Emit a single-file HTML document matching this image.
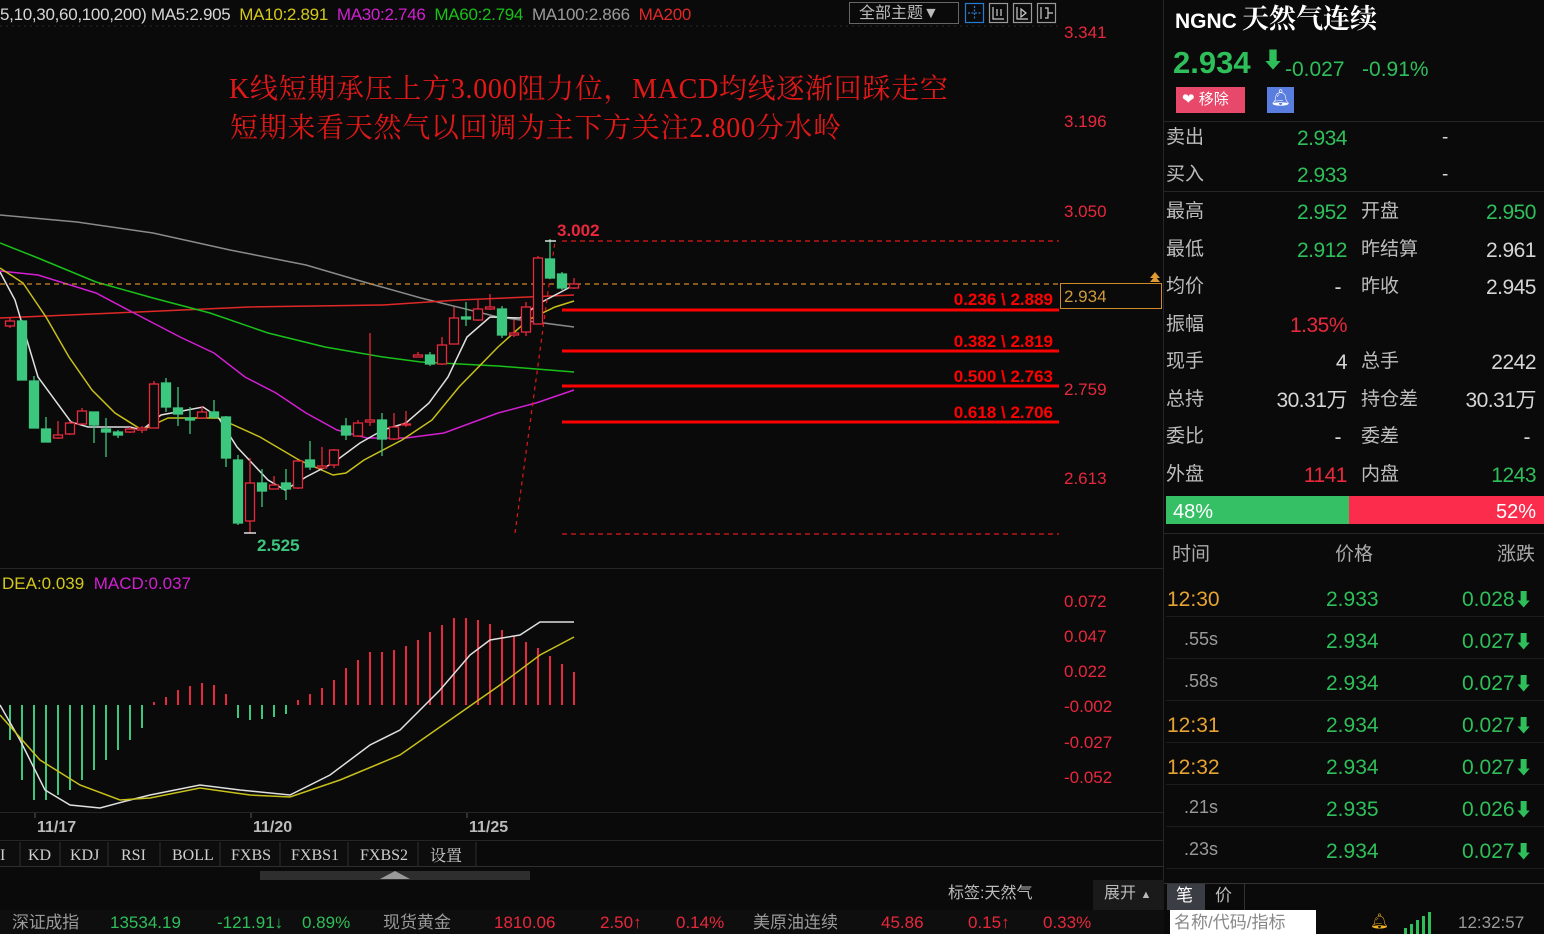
<!DOCTYPE html>
<html><head><meta charset="utf-8">
<style>
*{margin:0;padding:0;box-sizing:border-box}
body{width:1544px;height:934px;background:#0a0a0a;position:relative;overflow:hidden;font-family:"Liberation Sans","Noto Sans CJK SC",sans-serif;color:#ccc}
.a{position:absolute;white-space:nowrap;line-height:1}
.lb{color:#bdbdbd;font-size:19px}
.v{font-size:21px;text-align:right;letter-spacing:-0.5px}
.g{color:#2fbf5a}.r{color:#e8283c}.w{color:#d6d6d6}.y{color:#e7a332}.gr{color:#9a9a9a}
.serif{font-family:"Liberation Serif","Noto Serif CJK SC",serif}
</style></head><body>

<svg class="a" style="left:0;top:0" width="1164" height="934" xmlns="http://www.w3.org/2000/svg">
<line x1="0" y1="568.5" x2="1164" y2="568.5" stroke="#262626"/>
<line x1="0" y1="812.5" x2="1164" y2="812.5" stroke="#262626"/>
<line x1="0" y1="840.5" x2="1164" y2="840.5" stroke="#262626"/>
<line x1="1163.5" y1="0" x2="1163.5" y2="880" stroke="#262626"/>
<line x1="0" y1="26" x2="1060" y2="26" stroke="#2a2a2a" stroke-dasharray="2,4"/>
<polyline fill="none" stroke="#8a8a8a" stroke-width="1.5" points="0,215 77,222 153,233 230,250 306,265 364,282 421,298 498,317 574,327"/>
<polyline fill="none" stroke="#e02828" stroke-width="1.5" points="0,318 115,313 249,307 383,305 459,300 574,295"/>
<polyline fill="none" stroke="#19c119" stroke-width="1.5" points="0,243 38,258 96,282 153,298 210,313 268,333 325,347 383,357 421,362 498,366 574,372"/>
<polyline fill="none" stroke="#d21fd2" stroke-width="1.5" points="0,271 38,275 96,293 134,313 180,337 214,353 245,377 276,393 306,413 337,430 367,438 406,438 444,433 498,413 536,403 574,390"/>
<polyline fill="none" stroke="#c8c01a" stroke-width="1.5" points="0,268 23,283 46,317 69,357 92,390 115,413 142,430 168,418 218,418 260,437 299,460 333,475 346,473 364,460 402,440 432,420 459,387 498,347 528,320 555,307 574,301"/>
<polyline fill="none" stroke="#e0e0e0" stroke-width="1.5" points="0,272 15,300 38,377 71,422 88,427 130,427 142,430 161,415 203,407 218,417 237,447 268,480 285,490 306,477 333,463 360,443 383,430 406,423 429,403 448,377 467,337 490,317 520,318 540,303 559,293 574,285"/>
<line x1="0" y1="284" x2="1060" y2="284" stroke="#d08a2a" stroke-width="1.2" stroke-dasharray="5,4"/>
<line x1="562" y1="241" x2="1059" y2="241" stroke="#e01818" stroke-width="1.2" stroke-dasharray="5,4"/>
<line x1="562" y1="534" x2="1059" y2="534" stroke="#e01818" stroke-width="1.2" stroke-dasharray="5,4"/>
<line x1="515" y1="533" x2="555" y2="241" stroke="#e01818" stroke-width="1.2" stroke-dasharray="4,4"/>
<line x1="562" y1="310" x2="1059" y2="310" stroke="#f00" stroke-width="3"/>
<line x1="562" y1="351" x2="1059" y2="351" stroke="#f00" stroke-width="3"/>
<line x1="562" y1="386" x2="1059" y2="386" stroke="#f00" stroke-width="3"/>
<line x1="562" y1="422" x2="1059" y2="422" stroke="#f00" stroke-width="3"/>
<g font-family="Liberation Sans,sans-serif" font-weight="bold" font-size="17" fill="#f00" text-anchor="end">
<text x="1053" y="305">0.236 \ 2.889</text>
<text x="1053" y="347">0.382 \ 2.819</text>
<text x="1053" y="382">0.500 \ 2.763</text>
<text x="1053" y="418">0.618 \ 2.706</text>
</g>
<g stroke-width="1.3">
<g stroke="#e8283c" fill="#0a0a0a">
<line x1="10" y1="318" x2="10" y2="328"/><rect x="5.5" y="321" width="9" height="5"/>
<line x1="58" y1="421" x2="58" y2="439"/><rect x="53.5" y="435" width="9" height="3"/>
<line x1="70" y1="421" x2="70" y2="435"/><rect x="65.5" y="423" width="9" height="11"/>
<line x1="82" y1="408" x2="82" y2="424"/><rect x="77.5" y="411" width="9" height="13"/>
<line x1="130" y1="427" x2="130" y2="433"/><rect x="125.5" y="429" width="9" height="3"/>
<line x1="142" y1="426" x2="142" y2="433"/><rect x="137.5" y="428" width="9" height="2"/>
<line x1="154" y1="381" x2="154" y2="428"/><rect x="149.5" y="384" width="9" height="44"/>
<line x1="202" y1="406" x2="202" y2="419"/><rect x="197.5" y="412" width="9" height="6"/>
<line x1="250" y1="458" x2="250" y2="533"/><rect x="245.5" y="483" width="9" height="38"/>
<line x1="274" y1="476" x2="274" y2="489"/><rect x="269.5" y="485" width="9" height="4"/>
<line x1="298" y1="460" x2="298" y2="489"/><rect x="293.5" y="461" width="9" height="27"/>
<line x1="322" y1="447" x2="322" y2="469"/><rect x="317.5" y="466" width="9" height="2"/>
<line x1="334" y1="449" x2="334" y2="468"/><rect x="329.5" y="450" width="9" height="15"/>
<line x1="358" y1="420" x2="358" y2="437"/><rect x="353.5" y="423" width="9" height="13"/>
<line x1="370" y1="333" x2="370" y2="426"/><rect x="365.5" y="420" width="9" height="2"/>
<line x1="394" y1="413" x2="394" y2="440"/><rect x="389.5" y="427" width="9" height="12"/>
<line x1="406" y1="411" x2="406" y2="427"/><rect x="401.5" y="424" width="9" height="1"/>
<line x1="418" y1="352" x2="418" y2="357"/><rect x="413.5" y="355" width="9" height="2"/>
<line x1="442" y1="337" x2="442" y2="365"/><rect x="437.5" y="345" width="9" height="19"/>
<line x1="454" y1="307" x2="454" y2="344"/><rect x="449.5" y="318" width="9" height="26"/>
<line x1="478" y1="300" x2="478" y2="321"/><rect x="473.5" y="309" width="9" height="11"/>
<line x1="490" y1="294" x2="490" y2="310"/><rect x="485.5" y="307" width="9" height="2"/>
<line x1="514" y1="320" x2="514" y2="337"/><rect x="509.5" y="333" width="9" height="2"/>
<line x1="526" y1="302" x2="526" y2="336"/><rect x="521.5" y="307" width="9" height="25"/>
<line x1="538" y1="256" x2="538" y2="324"/><rect x="533.5" y="258" width="9" height="66"/>
<line x1="574" y1="278" x2="574" y2="289"/><rect x="569.5" y="284" width="9" height="4"/>
</g>
<g stroke="#3cc77e" fill="#3cc77e">
<line x1="22" y1="320" x2="22" y2="380"/><rect x="17.5" y="321" width="9" height="59"/>
<line x1="34" y1="376" x2="34" y2="428"/><rect x="29.5" y="381" width="9" height="47"/>
<line x1="46" y1="417" x2="46" y2="442"/><rect x="41.5" y="429" width="9" height="13"/>
<line x1="94" y1="412" x2="94" y2="443"/><rect x="89.5" y="412" width="9" height="13"/>
<line x1="106" y1="418" x2="106" y2="457"/><rect x="101.5" y="429" width="9" height="3"/>
<line x1="118" y1="430" x2="118" y2="438"/><rect x="113.5" y="432" width="9" height="3"/>
<line x1="166" y1="378" x2="166" y2="412"/><rect x="161.5" y="383" width="9" height="24"/>
<line x1="178" y1="387" x2="178" y2="426"/><rect x="173.5" y="408" width="9" height="6"/>
<line x1="190" y1="407" x2="190" y2="434"/><rect x="185.5" y="418" width="9" height="2"/>
<line x1="214" y1="400" x2="214" y2="419"/><rect x="209.5" y="412" width="9" height="5"/>
<line x1="226" y1="416" x2="226" y2="467"/><rect x="221.5" y="417" width="9" height="41"/>
<line x1="238" y1="455" x2="238" y2="525"/><rect x="233.5" y="460" width="9" height="63"/>
<line x1="262" y1="469" x2="262" y2="507"/><rect x="257.5" y="483" width="9" height="8"/>
<line x1="286" y1="469" x2="286" y2="500"/><rect x="281.5" y="483" width="9" height="6"/>
<line x1="310" y1="441" x2="310" y2="470"/><rect x="305.5" y="460" width="9" height="7"/>
<line x1="346" y1="418" x2="346" y2="440"/><rect x="341.5" y="426" width="9" height="9"/>
<line x1="382" y1="413" x2="382" y2="456"/><rect x="377.5" y="420" width="9" height="19"/>
<line x1="430" y1="352" x2="430" y2="366"/><rect x="425.5" y="355" width="9" height="9"/>
<line x1="466" y1="302" x2="466" y2="326"/><rect x="461.5" y="317" width="9" height="2"/>
<line x1="502" y1="306" x2="502" y2="338"/><rect x="497.5" y="309" width="9" height="26"/>
<line x1="550" y1="239" x2="550" y2="279"/><rect x="545.5" y="259" width="9" height="19"/>
<line x1="562" y1="272" x2="562" y2="290"/><rect x="557.5" y="274" width="9" height="14"/>
</g>
<line x1="545" y1="241" x2="556" y2="241" stroke="#fff"/>
<line x1="244" y1="533" x2="256" y2="533" stroke="#fff"/>
</g>
<text x="557" y="236" font-family="Liberation Sans,sans-serif" font-weight="bold" font-size="17" fill="#e8283c">3.002</text>
<text x="257" y="551" font-family="Liberation Sans,sans-serif" font-weight="bold" font-size="17" fill="#3cc77e">2.525</text>
<rect x="1060.5" y="283.5" width="101" height="25" fill="#0a0a0a" stroke="#d08a2a"/>
<text x="1064" y="302" font-family="Liberation Sans,sans-serif" font-size="17" fill="#d09a3a">2.934</text>
<path d="M1150,282 L1155,276 L1160,282Z M1150,278 L1155,272 L1160,278Z" fill="#e09a30"/>
<g font-family="Liberation Sans,sans-serif" font-size="17" fill="#e8283c">
<text x="1064" y="38">3.341</text><text x="1064" y="127">3.196</text><text x="1064" y="217">3.050</text>
<text x="1064" y="395">2.759</text><text x="1064" y="484">2.613</text>
<text x="1064" y="607">0.072</text><text x="1064" y="642">0.047</text><text x="1064" y="677">0.022</text>
<text x="1064" y="712">-0.002</text><text x="1064" y="748">-0.027</text><text x="1064" y="783">-0.052</text>
</g>
<g stroke="#3cc77e" stroke-width="2">
<line x1="10" y1="705" x2="10" y2="740"/><line x1="22" y1="705" x2="22" y2="780"/><line x1="34" y1="705" x2="34" y2="800"/>
<line x1="46" y1="705" x2="46" y2="800"/><line x1="58" y1="705" x2="58" y2="795"/><line x1="70" y1="705" x2="70" y2="790"/>
<line x1="82" y1="705" x2="82" y2="780"/><line x1="94" y1="705" x2="94" y2="770"/><line x1="106" y1="705" x2="106" y2="760"/>
<line x1="118" y1="705" x2="118" y2="750"/><line x1="130" y1="705" x2="130" y2="740"/><line x1="142" y1="705" x2="142" y2="728"/>
<line x1="238" y1="705" x2="238" y2="718"/><line x1="250" y1="705" x2="250" y2="720"/><line x1="262" y1="705" x2="262" y2="719"/>
<line x1="274" y1="705" x2="274" y2="717"/><line x1="286" y1="705" x2="286" y2="714"/>
</g>
<g stroke="#e8283c" stroke-width="2">
<line x1="154" y1="705" x2="154" y2="702"/><line x1="166" y1="705" x2="166" y2="697"/><line x1="178" y1="705" x2="178" y2="690"/>
<line x1="190" y1="705" x2="190" y2="686"/><line x1="202" y1="705" x2="202" y2="683"/><line x1="214" y1="705" x2="214" y2="685"/>
<line x1="226" y1="705" x2="226" y2="694"/>
<line x1="298" y1="705" x2="298" y2="700"/><line x1="310" y1="705" x2="310" y2="694"/><line x1="322" y1="705" x2="322" y2="688"/>
<line x1="334" y1="705" x2="334" y2="680"/><line x1="346" y1="705" x2="346" y2="668"/><line x1="358" y1="705" x2="358" y2="660"/>
<line x1="370" y1="705" x2="370" y2="652"/><line x1="382" y1="705" x2="382" y2="652"/><line x1="394" y1="705" x2="394" y2="650"/>
<line x1="406" y1="705" x2="406" y2="646"/><line x1="418" y1="705" x2="418" y2="640"/><line x1="430" y1="705" x2="430" y2="632"/>
<line x1="442" y1="705" x2="442" y2="625"/><line x1="454" y1="705" x2="454" y2="618"/><line x1="466" y1="705" x2="466" y2="618"/>
<line x1="478" y1="705" x2="478" y2="620"/><line x1="490" y1="705" x2="490" y2="624"/><line x1="502" y1="705" x2="502" y2="630"/>
<line x1="514" y1="705" x2="514" y2="636"/><line x1="526" y1="705" x2="526" y2="642"/><line x1="538" y1="705" x2="538" y2="648"/>
<line x1="550" y1="705" x2="550" y2="656"/><line x1="562" y1="705" x2="562" y2="664"/><line x1="574" y1="705" x2="574" y2="672"/>
</g>
<polyline fill="none" stroke="#e0e0e0" stroke-width="1.5" points="0,705 20,740 45,790 70,805 100,808 130,800 150,795 200,785 240,790 290,795 330,775 370,745 400,730 440,690 470,655 490,640 520,635 540,622 574,622"/>
<polyline fill="none" stroke="#c8c01a" stroke-width="1.5" points="0,715 40,760 80,785 120,800 150,798 200,788 250,795 290,797 340,780 400,755 450,720 500,685 540,655 574,637"/>
<g stroke="#555"><line x1="35" y1="813" x2="35" y2="818"/><line x1="251" y1="813" x2="251" y2="818"/><line x1="467" y1="813" x2="467" y2="818"/></g>
<g font-family="Liberation Sans,sans-serif" font-size="16" font-weight="bold" fill="#bbb">
<text x="37" y="832">11/17</text><text x="253" y="832">11/20</text><text x="469" y="832">11/25</text></g>
<rect x="0" y="842" width="476" height="24" fill="#0d0d0d"/>
<g stroke="#2e2e2e"><line x1="20" y1="842" x2="20" y2="866"/><line x1="60" y1="842" x2="60" y2="866"/><line x1="108" y1="842" x2="108" y2="866"/><line x1="160" y1="842" x2="160" y2="866"/><line x1="220" y1="842" x2="220" y2="866"/><line x1="280" y1="842" x2="280" y2="866"/><line x1="348" y1="842" x2="348" y2="866"/><line x1="418" y1="842" x2="418" y2="866"/><line x1="476" y1="842" x2="476" y2="866"/><line x1="0" y1="866.5" x2="1164" y2="866.5"/></g>
<g font-family="Liberation Serif,Noto Serif CJK SC,serif" font-size="16" fill="#cfcfcf">
<text x="0" y="860">I</text><text x="28" y="860">KD</text><text x="70" y="860">KDJ</text><text x="121" y="860">RSI</text><text x="172" y="860">BOLL</text><text x="231" y="860">FXBS</text><text x="291" y="860">FXBS1</text><text x="360" y="860">FXBS2</text><text x="430" y="861">设置</text></g>
<rect x="260" y="871" width="270" height="9" fill="#2e2e2e"/>
<path d="M380,879 L395,871 L410,879Z" fill="#9a9a9a"/>
<rect x="1093" y="880" width="71" height="30" fill="#1a1a1a"/>
<!-- top toolbar icons -->
<g fill="none" stroke-width="1.2">
<rect x="965.5" y="3.5" width="18" height="19" stroke="#2a7ad0"/>
<path d="M974.5,6 V20 M968,13 H981" stroke="#2a7ad0" stroke-dasharray="2,1.5"/>
<rect x="989.5" y="3.5" width="18" height="19" stroke="#999"/>
<path d="M993,7 V19 H1004 M997,9 V16 M1001,9 V16" stroke="#ccc"/>
<rect x="1013.5" y="3.5" width="18" height="19" stroke="#999"/>
<path d="M1017,7 V19 H1028 M1021,9 L1026,13 L1021,17Z" stroke="#ccc"/>
<rect x="1037.5" y="3.5" width="18" height="19" stroke="#999"/>
<path d="M1041,7 V19 M1045,8 H1048 V18 H1045 M1048,13 H1053" stroke="#ccc"/>
</g>
</svg>

<div class="a" style="left:0;top:6px;font-size:17px;letter-spacing:-0.3px"><span class="w">5,10,30,60,100,200) MA5:2.905</span>&nbsp; <span style="color:#d4c81c">MA10:2.891</span>&nbsp; <span style="color:#d21fd2">MA30:2.746</span>&nbsp; <span style="color:#19c119">MA60:2.794</span>&nbsp; <span style="color:#9a9a9a">MA100:2.866</span>&nbsp; <span style="color:#e02828">MA200</span></div>
<div class="a" style="left:849px;top:2px;width:110px;height:22px;border:1px solid #666;font-size:16px;color:#bbb;padding:3px 0 0 9px">全部主题▼</div>

<div class="a serif" style="left:229px;top:76px;font-size:28px;color:#e01818;letter-spacing:0.7px">K线短期承压上方3.000阻力位，MACD均线逐渐回踩走空</div>
<div class="a serif" style="left:230px;top:115px;font-size:28px;color:#e01818;letter-spacing:0.7px">短期来看天然气以回调为主下方关注2.800分水岭</div>

<div class="a" style="left:2px;top:575px;font-size:17px"><span style="color:#d4c81c">DEA:0.039</span>&nbsp; <span style="color:#d21fd2">MACD:0.037</span></div>

<div class="a" style="left:948px;top:886px;font-size:16px;color:#bbb">标签:天然气</div>
<div class="a" style="left:1104px;top:886px;font-size:16px;color:#bbb">展开 <span style="font-size:11px">▲</span></div>

<div class="a" style="left:1175px;top:11px;font-size:21px;font-weight:bold;color:#fff">NGNC</div>
<div class="a serif" style="left:1242px;top:6px;font-size:27px;font-weight:bold;color:#fff">天然气连续</div>
<div class="a g" style="left:1173px;top:47px;font-size:31px;font-weight:bold">2.934</div>
<div class="a g" style="left:1262px;top:50px;font-size:22px;font-weight:bold">⬇</div>
<div class="a g" style="left:1285px;top:59px;font-size:21px">-0.027&nbsp;&nbsp; -0.91%</div>
<div class="a" style="left:1176px;top:87px;width:69px;height:26px;background:#e8486a;color:#fff;font-size:15px;padding:5px 0 0 6px">❤ 移除</div>
<div class="a" style="left:1267px;top:87px;width:27px;height:26px;background:#5a7ee0;color:#fff;font-size:16px;text-align:center;padding-top:4px">🔔︎</div>
<div class="a" style="left:1164px;top:121px;width:380px;height:1px;background:#262626"></div>

<div class="a lb" style="left:1166px;top:128px">卖出</div><div class="a v g" style="left:1240px;width:107px;top:128px">2.934</div><div class="a w" style="left:1442px;top:128px;font-size:19px">-</div>
<div class="a lb" style="left:1166px;top:165px">买入</div><div class="a v g" style="left:1240px;width:107px;top:165px">2.933</div><div class="a w" style="left:1442px;top:165px;font-size:19px">-</div>
<div class="a" style="left:1164px;top:191px;width:380px;height:1px;background:#262626"></div>

<div class="a lb" style="left:1166px;top:202px">最高</div><div class="a v g" style="left:1240px;width:107px;top:202px">2.952</div><div class="a lb" style="left:1361px;top:202px">开盘</div><div class="a v g" style="left:1420px;width:116px;top:202px">2.950</div>
<div class="a lb" style="left:1166px;top:240px">最低</div><div class="a v g" style="left:1240px;width:107px;top:240px">2.912</div><div class="a lb" style="left:1361px;top:240px">昨结算</div><div class="a v w" style="left:1420px;width:116px;top:240px">2.961</div>
<div class="a lb" style="left:1166px;top:277px">均价</div><div class="a v w" style="left:1240px;width:101px;top:277px">-</div><div class="a lb" style="left:1361px;top:277px">昨收</div><div class="a v w" style="left:1420px;width:116px;top:277px">2.945</div>
<div class="a lb" style="left:1166px;top:315px">振幅</div><div class="a v r" style="left:1240px;width:107px;top:315px">1.35%</div>
<div class="a lb" style="left:1166px;top:352px">现手</div><div class="a v w" style="left:1240px;width:107px;top:352px">4</div><div class="a lb" style="left:1361px;top:352px">总手</div><div class="a v w" style="left:1420px;width:116px;top:352px">2242</div>
<div class="a lb" style="left:1166px;top:390px">总持</div><div class="a v w" style="left:1240px;width:107px;top:390px">30.31万</div><div class="a lb" style="left:1361px;top:390px">持仓差</div><div class="a v w" style="left:1420px;width:116px;top:390px">30.31万</div>
<div class="a lb" style="left:1166px;top:427px">委比</div><div class="a v w" style="left:1240px;width:101px;top:427px">-</div><div class="a lb" style="left:1361px;top:427px">委差</div><div class="a v w" style="left:1420px;width:110px;top:427px">-</div>
<div class="a lb" style="left:1166px;top:465px">外盘</div><div class="a v r" style="left:1240px;width:107px;top:465px">1141</div><div class="a lb" style="left:1361px;top:465px">内盘</div><div class="a v g" style="left:1420px;width:116px;top:465px">1243</div>

<div class="a" style="left:1166px;top:496px;width:183px;height:28px;background:#36c066"></div>
<div class="a" style="left:1349px;top:496px;width:195px;height:28px;background:#fb2c4c"></div>
<div class="a" style="left:1173px;top:502px;font-size:20px;color:#fff">48%</div>
<div class="a" style="left:1496px;top:502px;font-size:20px;color:#fff">52%</div>
<div class="a" style="left:1164px;top:533px;width:380px;height:1px;background:#262626"></div>

<div class="a lb" style="left:1172px;top:545px;color:#aaa">时间</div>
<div class="a lb" style="left:1335px;top:545px;color:#aaa">价格</div>
<div class="a lb" style="left:1497px;top:545px;color:#aaa">涨跌</div>

<div class="a y" style="left:1167px;top:589px;font-size:21px">12:30</div>
<div class="a gr" style="left:1184px;top:630px;font-size:18px">.55s</div>
<div class="a gr" style="left:1184px;top:672px;font-size:18px">.58s</div>
<div class="a y" style="left:1167px;top:715px;font-size:21px">12:31</div>
<div class="a y" style="left:1167px;top:757px;font-size:21px">12:32</div>
<div class="a gr" style="left:1184px;top:798px;font-size:18px">.21s</div>
<div class="a gr" style="left:1184px;top:840px;font-size:18px">.23s</div>

<div class="a g" style="left:1326px;top:589px;font-size:21px">2.933</div>
<div class="a g" style="left:1326px;top:631px;font-size:21px">2.934</div>
<div class="a g" style="left:1326px;top:673px;font-size:21px">2.934</div>
<div class="a g" style="left:1326px;top:715px;font-size:21px">2.934</div>
<div class="a g" style="left:1326px;top:757px;font-size:21px">2.934</div>
<div class="a g" style="left:1326px;top:799px;font-size:21px">2.935</div>
<div class="a g" style="left:1326px;top:841px;font-size:21px">2.934</div>

<div class="a g" style="left:1462px;top:589px;font-size:21px">0.028<b style="font-size:18px">⬇</b></div>
<div class="a g" style="left:1462px;top:631px;font-size:21px">0.027<b style="font-size:18px">⬇</b></div>
<div class="a g" style="left:1462px;top:673px;font-size:21px">0.027<b style="font-size:18px">⬇</b></div>
<div class="a g" style="left:1462px;top:715px;font-size:21px">0.027<b style="font-size:18px">⬇</b></div>
<div class="a g" style="left:1462px;top:757px;font-size:21px">0.027<b style="font-size:18px">⬇</b></div>
<div class="a g" style="left:1462px;top:799px;font-size:21px">0.026<b style="font-size:18px">⬇</b></div>
<div class="a g" style="left:1462px;top:841px;font-size:21px">0.027<b style="font-size:18px">⬇</b></div>

<div class="a" style="left:1166px;top:616px;width:378px;height:1px;background:#1c1c1c"></div>
<div class="a" style="left:1166px;top:658px;width:378px;height:1px;background:#1c1c1c"></div>
<div class="a" style="left:1166px;top:700px;width:378px;height:1px;background:#1c1c1c"></div>
<div class="a" style="left:1166px;top:742px;width:378px;height:1px;background:#1c1c1c"></div>
<div class="a" style="left:1166px;top:784px;width:378px;height:1px;background:#1c1c1c"></div>
<div class="a" style="left:1166px;top:826px;width:378px;height:1px;background:#1c1c1c"></div>
<div class="a" style="left:1166px;top:868px;width:378px;height:1px;background:#1c1c1c"></div>
<div class="a" style="left:1164px;top:883px;width:380px;height:1px;background:#333"></div>
<div class="a" style="left:1167px;top:884px;width:38px;height:26px;background:#3a3d44;color:#fff;font-size:17px;padding:3px 0 0 9px">笔</div>
<div class="a" style="left:1215px;top:887px;font-size:17px;color:#bbb">价</div>
<div class="a" style="left:1244px;top:884px;width:1px;height:26px;background:#333"></div>

<div class="a" style="left:0;top:910px;width:1164px;height:24px;background:#0e0e0e"></div>
<div class="a" style="left:12px;top:914px;font-size:17px;letter-spacing:-0.3px;color:#9a9a9a">深证成指</div>
<div class="a g" style="left:110px;top:914px;font-size:17px">13534.19</div>
<div class="a g" style="left:217px;top:914px;font-size:17px">-121.91↓</div>
<div class="a g" style="left:302px;top:914px;font-size:17px">0.89%</div>
<div class="a" style="left:383px;top:914px;font-size:17px;color:#9a9a9a">现货黄金</div>
<div class="a r" style="left:494px;top:914px;font-size:17px">1810.06</div>
<div class="a r" style="left:600px;top:914px;font-size:17px">2.50↑</div>
<div class="a r" style="left:676px;top:914px;font-size:17px">0.14%</div>
<div class="a" style="left:753px;top:914px;font-size:17px;color:#9a9a9a">美原油连续</div>
<div class="a r" style="left:881px;top:914px;font-size:17px">45.86</div>
<div class="a r" style="left:968px;top:914px;font-size:17px">0.15↑</div>
<div class="a r" style="left:1043px;top:914px;font-size:17px">0.33%</div>
<div class="a" style="left:1170px;top:910px;width:146px;height:24px;background:#fff;color:#888;font-size:17px;padding:4px 0 0 4px">名称/代码/指标</div>
<div class="a" style="left:1370px;top:914px;font-size:15px;color:#f0b020">🔔︎</div>
<svg class="a" style="left:1404px;top:912px" width="28" height="22"><g fill="#2fbf5a"><rect x="0" y="16" width="3" height="6"/><rect x="6" y="12" width="3" height="10"/><rect x="12" y="8" width="3" height="14"/><rect x="18" y="4" width="3" height="18"/><rect x="24" y="0" width="3" height="22"/></g></svg>
<div class="a" style="left:1458px;top:914px;font-size:17px;color:#9a9a9a">12:32:57</div>
</body></html>
